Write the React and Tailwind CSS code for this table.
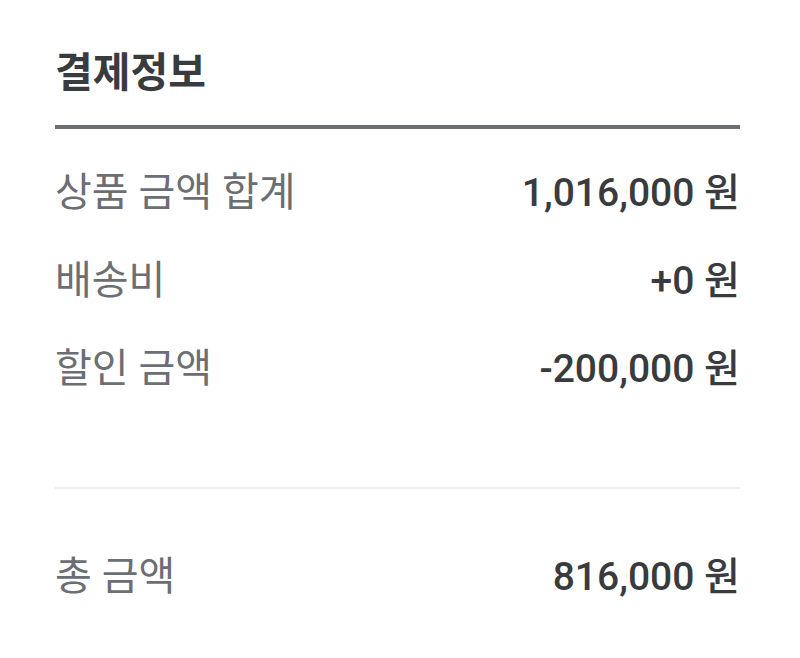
const rows = [
  { label: "상품 금액 합계", value: "1,016,000 원" },
  { label: "배송비", value: "+0 원" },
  { label: "할인 금액", value: "-200,000 원" },
];

export default function App() {
  return (
    <div
      className="w-[800px] h-[658px] bg-white pl-[55px] pr-[60px] pt-[44px]"
      style={{ fontFamily: "Roboto, 'Noto Sans CJK KR', sans-serif" }}
    >
      {/* 제목 */}
      <h2 className="text-[41px] leading-[58px] font-bold text-[#3a3b3e]">결제정보</h2>
      <div className="mt-[23px] h-[4px] bg-[#6b6e73]" />

      {/* 금액 목록 */}
      <div className="pt-[40px] flex flex-col gap-[40px]">
        {rows.map((r) => (
          <div key={r.label} className="flex items-center justify-between h-[48px] leading-[48px]">
            <span className="text-[40px] text-[#6b6e73]">{r.label}</span>
            <span className="text-[39px] font-medium text-[#3a3b3e]">{r.value}</span>
          </div>
        ))}
      </div>

      <div className="mt-[94px] h-[2px] bg-[#eeeeef]" />

      {/* 총 금액 */}
      <div className="mt-[64px] flex items-center justify-between h-[48px] leading-[48px]">
        <span className="text-[40px] text-[#6b6e73]">총 금액</span>
        <span className="text-[39px] font-medium text-[#3a3b3e]">816,000 원</span>
      </div>
    </div>
  );
}
